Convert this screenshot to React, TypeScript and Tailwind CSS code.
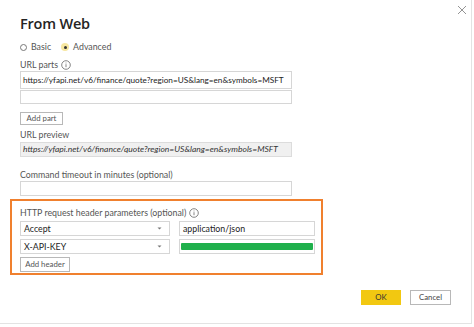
import React from "react";

const Info = () => (
  <svg width="10" height="10" viewBox="0 0 10 10" className="inline-block">
    <circle cx="5" cy="5" r="4.3" fill="none" stroke="#666" strokeWidth="0.8" />
    <rect x="4.6" y="4.2" width="0.8" height="3" fill="#666" />
    <rect x="4.6" y="2.6" width="0.8" height="0.8" fill="#666" />
  </svg>
);

const Caret = () => (
  <svg width="5" height="3" viewBox="0 0 5 3">
    <path d="M0.5 0.5 L2.5 2.5 L4.5 0.5 Z" fill="#777" />
  </svg>
);

export default function App() {
  return (
    <div
      className="w-[474px] h-[327px] bg-white overflow-hidden text-[#333]"
      style={{ fontFamily: 'Lato, "Noto Sans", sans-serif' }}
    >
      <div className="relative w-[472px] h-[324px] border-r border-b border-[#e3e3e3]">
        <svg
          className="absolute left-[457px] top-[5px]"
          width="10"
          height="10"
          viewBox="0 0 10 10"
        >
          <path d="M1 1 L9 9 M9 1 L1 9" stroke="#888" strokeWidth="0.9" />
        </svg>

        <div className="pl-[20px] pt-[13px] flex flex-col">
          <div
            className="text-[14.5px] font-semibold leading-[22px] text-[#252423]"
            style={{ fontFamily: '"Open Sans", sans-serif', letterSpacing: "-0.2px" }}
          >
            From Web
          </div>

          <div className="flex items-center mt-[6px] h-[12px] text-[8.8px] text-[#555]">
            <span className="w-[7px] h-[7px] rounded-full border border-[#777] mr-[4px]" />
            <span>Basic</span>
            <span className="ml-[10px] w-[8px] h-[8px] rounded-full bg-[#f7e7a0] flex items-center justify-center mr-[4px]">
              <span className="w-[3px] h-[3px] rounded-full bg-[#333]" />
            </span>
            <span>Advanced</span>
          </div>

          <div className="flex items-center gap-[3px] mt-[6px] h-[12px] text-[8.8px] text-[#555]">
            <span>URL parts</span>
            <Info />
          </div>

          <div className="w-[272px] h-[18px] border border-[#d6d6d6] flex items-center pl-[2px] text-[8.2px] text-[#222] whitespace-nowrap">
            https://yfapi.net/v6/finance/quote?region=US&amp;lang=en&amp;symbols=MSFT
          </div>
          <div className="mt-[1px] w-[272px] h-[14px] border border-[#d6d6d6]" />

          <div className="mt-[8px] w-[43px] h-[13px] border border-[#b8b8b8] flex items-center justify-center text-[7.8px] text-[#555]">
            Add part
          </div>

          <div className="mt-[4px] h-[12px] flex items-center text-[8.8px] text-[#555]">
            URL preview
          </div>
          <div className="mt-[1px] w-[272px] h-[15px] bg-[#f0f0f0] border border-[#dcdcdc] flex items-center pl-[2px] text-[8.5px] italic text-[#333] whitespace-nowrap">
            https://yfapi.net/v6/finance/quote?region=US&amp;lang=en&amp;symbols=MSFT
          </div>

          <div className="mt-[12px] h-[12px] flex items-center text-[8.8px] text-[#555]">
            Command timeout in minutes (optional)
          </div>
          <div className="w-[272px] h-[15px] border border-[#d6d6d6]" />
        </div>

        <div className="ml-[10px] mt-[3px] w-[313px] h-[76px] border-[2.5px] border-[#f0802e] pl-[8px] pt-[6px] flex flex-col">
          <div className="flex items-center gap-[3px] h-[12px] text-[8.8px] text-[#555]">
            <span>HTTP request header parameters (optional)</span>
            <Info />
          </div>
          <div className="flex mt-[2px] h-[15px]">
            <div className="w-[150px] h-[15px] border border-[#d6d6d6] flex items-center justify-between pl-[3px] pr-[7px] text-[8.8px] text-[#222]">
              <span>Accept</span>
              <Caret />
            </div>
            <div className="ml-[9px] w-[136px] h-[15px] border border-[#d6d6d6] flex items-center pl-[3px] text-[8.8px] text-[#222]">
              application/json
            </div>
          </div>
          <div className="flex mt-[3px] h-[15px]">
            <div className="w-[150px] h-[15px] border border-[#d6d6d6] flex items-center justify-between pl-[3px] pr-[7px] text-[8.8px] text-[#222]">
              <span>X-API-KEY</span>
              <Caret />
            </div>
            <div className="ml-[9px] w-[136px] h-[15px] border border-[#d6d6d6] flex items-center px-[1px]">
              <div className="w-full h-[7px] bg-[#1fb04c] rounded-[1px]" />
            </div>
          </div>
          <div className="mt-[3px] w-[50px] h-[15px] border border-[#b8b8b8] flex items-center justify-center text-[7.8px] text-[#555]">
            Add header
          </div>
        </div>

        <div className="flex justify-end gap-[9px] mt-[15px] pr-[20px]">
          <div className="w-[40px] h-[15px] bg-[#f2c811] flex items-center justify-center text-[7.8px] text-[#333]">
            OK
          </div>
          <div className="w-[41px] h-[15px] border border-[#b8b8b8] flex items-center justify-center text-[7.8px] text-[#444]">
            Cancel
          </div>
        </div>
      </div>
    </div>
  );
}
